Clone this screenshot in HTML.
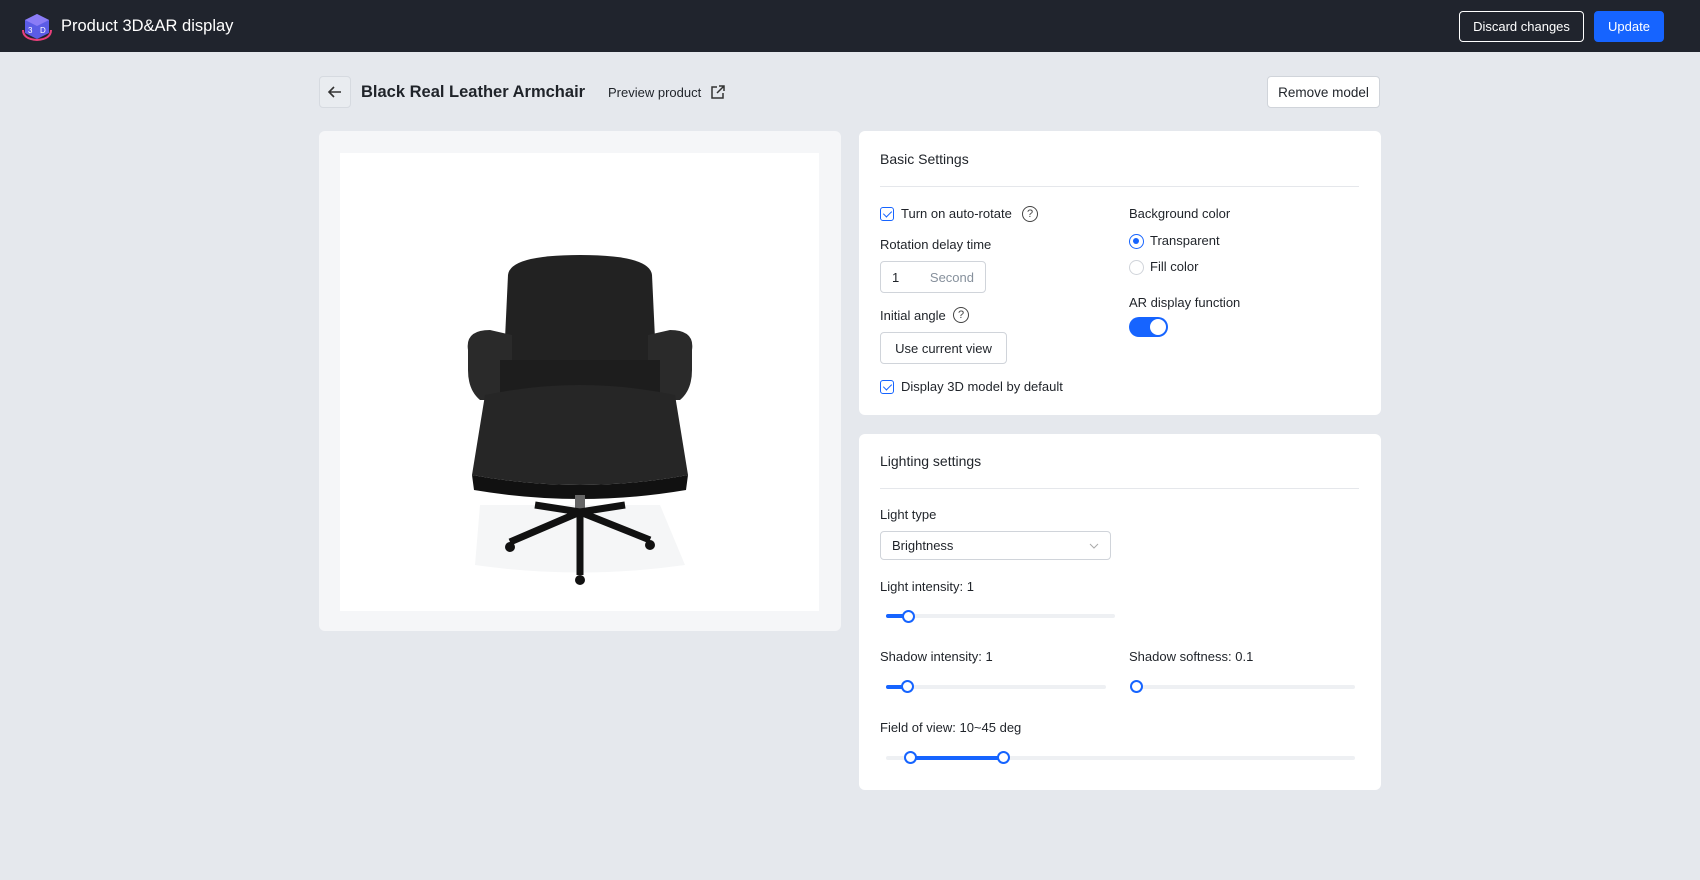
<!DOCTYPE html>
<html><head><meta charset="utf-8"><style>
*{box-sizing:border-box;margin:0;padding:0}
body{width:1700px;height:880px;background:#e5e8ed;font-family:"Liberation Sans",sans-serif;color:#1f2329;position:relative;overflow:hidden;font-size:13px}
.a{position:absolute}
.hdr{left:0;top:0;width:1700px;height:52px;background:#20242d}
.btn{position:absolute;border:1px solid #d0d4da;background:#fff;border-radius:4px;display:flex;align-items:center;justify-content:center;font-size:13px;color:#1f2329}
.card{position:absolute;background:#fff;border-radius:6px}
.lbl{position:absolute;font-size:13px;color:#1f2329;line-height:16px}
.cb{position:absolute;width:14px;height:14px;border:1.3px solid #1664ff;border-radius:3px}
.cb:after{content:"";position:absolute;left:3.5px;top:1px;width:4px;height:7px;border:solid #1664ff;border-width:0 1.5px 1.5px 0;transform:rotate(45deg)}
.q{position:absolute;width:16px;height:16px;border:1.2px solid #444;border-radius:50%;font-size:11px;text-align:center;line-height:14px;color:#444}
.track{position:absolute;height:4px;background:#eef0f3;border-radius:2px}
.fill{position:absolute;height:4px;background:#1664ff;border-radius:2px}
.hd{position:absolute;width:13px;height:13px;border:2.5px solid #1664ff;border-radius:50%;background:#fff}
</style></head><body>
<div class="a hdr"></div>
<svg class="a" style="left:21px;top:12px" width="32" height="30" viewBox="0 0 32 30">
<path d="M16 2 L28 8 L28 21 L16 27 L4 21 L4 8 Z" fill="#5b5ce6"/>
<path d="M16 2 L28 8 L16 14 L4 8Z" fill="#8b7cf6"/>
<path d="M2 18 Q2 27 16 28 Q30 27 30 18" stroke="#e8407a" stroke-width="2" fill="none"/>
<text x="7" y="21" font-size="8" fill="#fff" font-family="Liberation Sans">3</text><text x="19" y="21" font-size="8" fill="#fff" font-family="Liberation Sans">D</text>
</svg>
<div class="a" style="left:61px;top:17px;color:#fff;font-size:16.5px">Product 3D&amp;AR display</div>
<div class="btn" style="left:1459px;top:11px;width:125px;height:31px;background:transparent;color:#fff;border-color:#fff">Discard changes</div>
<div class="btn" style="left:1594px;top:11px;width:70px;height:31px;background:#1664ff;border-color:#1664ff;color:#fff">Update</div>

<div class="btn" style="left:319px;top:76px;width:32px;height:32px;background:#e9ecf0;border-color:#d6dae0">
<svg width="16" height="16" viewBox="0 0 16 16"><path d="M14 8H2M7 3L2 8l5 5" stroke="#333" stroke-width="1.6" fill="none"/></svg></div>
<div class="a" style="left:361px;top:83px;font-size:16.5px;font-weight:bold;color:#1f2329">Black Real Leather Armchair</div>
<div class="a" style="left:608px;top:85px;font-size:13px">Preview product</div>
<svg class="a" style="left:710px;top:84px" width="16" height="16" viewBox="0 0 16 16"><path d="M13 9v5H2V3h5M9 2h5v5M14 2L7 9" stroke="#333" stroke-width="1.5" fill="none"/></svg>
<div class="btn" style="left:1267px;top:76px;width:113px;height:32px;font-size:13.5px">Remove model</div>

<div class="card" style="left:319px;top:131px;width:522px;height:500px;background:#f5f6f8"></div>
<div class="a" style="left:340px;top:153px;width:479px;height:458px;background:#fff"></div>
<svg class="a" style="left:460px;top:250px" width="240" height="340" viewBox="0 0 240 340">
<path d="M20 255 L200 255 L225 315 Q120 330 15 315Z" fill="#f5f6f7"/>
<path d="M48 25 Q50 5 120 5 Q190 5 192 25 L196 110 L44 110Z" fill="#222"/>
<path d="M8 100 Q5 80 30 80 L52 85 L52 150 L20 150 Q8 140 8 120Z" fill="#2a2a2a"/>
<path d="M232 100 Q235 80 210 80 L188 85 L188 150 L220 150 Q232 140 232 120Z" fill="#2a2a2a"/>
<path d="M40 110 L200 110 L200 150 L40 150Z" fill="#1d1d1d"/>
<path d="M25 145 Q120 125 215 145 L228 225 Q120 245 12 225Z" fill="#262626"/>
<path d="M12 225 Q120 245 228 225 L226 240 Q120 258 14 240Z" fill="#111"/>
<rect x="115" y="245" width="10" height="20" fill="#666"/>
<path d="M120 262 L50 292 M120 262 L190 290 M120 262 L120 325 M120 262 L75 255 M120 262 L165 255" stroke="#111" stroke-width="7"/>
<circle cx="50" cy="297" r="5" fill="#111"/><circle cx="190" cy="295" r="5" fill="#111"/><circle cx="120" cy="330" r="5" fill="#111"/>
</svg>

<div class="card" style="left:859px;top:131px;width:522px;height:284px"></div>
<div class="lbl" style="left:880px;top:151px;font-size:14px">Basic Settings</div>
<div class="a" style="left:880px;top:186px;width:479px;height:1px;background:#e5e7eb"></div>
<div class="cb" style="left:880px;top:207px"></div>
<div class="lbl" style="left:901px;top:206px">Turn on auto-rotate</div>
<div class="q" style="left:1022px;top:206px">?</div>
<div class="lbl" style="left:880px;top:237px">Rotation delay time</div>
<div class="btn" style="left:880px;top:261px;width:106px;height:32px;justify-content:space-between;padding:0 11px"><span>1</span><span style="color:#86909c">Second</span></div>
<div class="lbl" style="left:880px;top:308px">Initial angle</div>
<div class="q" style="left:953px;top:307px">?</div>
<div class="btn" style="left:880px;top:332px;width:127px;height:32px">Use current view</div>
<div class="cb" style="left:880px;top:380px"></div>
<div class="lbl" style="left:901px;top:379px">Display 3D model by default</div>
<div class="lbl" style="left:1129px;top:206px">Background color</div>
<div class="a" style="left:1129px;top:234px;width:15px;height:15px;border-radius:50%;border:1.5px solid #1664ff"><div class="a" style="left:3px;top:3px;width:6px;height:6px;border-radius:50%;background:#1664ff"></div></div>
<div class="lbl" style="left:1150px;top:233px">Transparent</div>
<div class="a" style="left:1129px;top:260px;width:15px;height:15px;border-radius:50%;border:1px solid #d0d4da"></div>
<div class="lbl" style="left:1150px;top:259px">Fill color</div>
<div class="lbl" style="left:1129px;top:295px">AR display function</div>
<div class="a" style="left:1129px;top:317px;width:39px;height:20px;border-radius:10px;background:#1664ff"><div class="a" style="left:21px;top:2px;width:16px;height:16px;border-radius:50%;background:#fff"></div></div>

<div class="card" style="left:859px;top:434px;width:522px;height:356px"></div>
<div class="lbl" style="left:880px;top:453px;font-size:14px">Lighting settings</div>
<div class="a" style="left:880px;top:488px;width:479px;height:1px;background:#e5e7eb"></div>
<div class="lbl" style="left:880px;top:507px">Light type</div>
<div class="btn" style="left:880px;top:531px;width:231px;height:29px;justify-content:space-between;padding:0 11px"><span>Brightness</span><svg width="10" height="6" viewBox="0 0 10 6"><path d="M1 1l4 4 4-4" stroke="#aaa" fill="none"/></svg></div>
<div class="lbl" style="left:880px;top:579px">Light intensity: 1</div>
<div class="track" style="left:886px;top:614px;width:229px"></div><div class="fill" style="left:886px;top:614px;width:22px"></div><div class="hd" style="left:902px;top:610px"></div>
<div class="lbl" style="left:880px;top:649px">Shadow intensity: 1</div>
<div class="track" style="left:886px;top:685px;width:220px"></div><div class="fill" style="left:886px;top:685px;width:22px"></div><div class="hd" style="left:901px;top:680px"></div>
<div class="lbl" style="left:1129px;top:649px">Shadow softness: 0.1</div>
<div class="track" style="left:1131px;top:685px;width:224px"></div><div class="hd" style="left:1130px;top:680px"></div>
<div class="lbl" style="left:880px;top:720px">Field of view: 10~45 deg</div>
<div class="track" style="left:886px;top:756px;width:469px"></div><div class="fill" style="left:911px;top:756px;width:92px"></div>
<div class="hd" style="left:904px;top:751px"></div><div class="hd" style="left:997px;top:751px"></div>
</body></html>
